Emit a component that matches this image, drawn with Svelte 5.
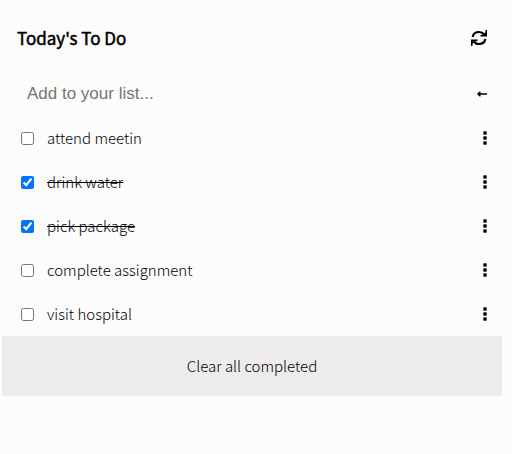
<script>
  let draft = $state('');
  let tasks = $state([
    { id: 1, text: 'attend meetin', done: false },
    { id: 2, text: 'drink water', done: true },
    { id: 3, text: 'pick package', done: true },
    { id: 4, text: 'complete assignment', done: false },
    { id: 5, text: 'visit hospital', done: false }
  ]);

  function add(event) {
    event.preventDefault();
    if (!draft.trim()) return;
    tasks.push({ id: Date.now(), text: draft.trim(), done: false });
    draft = '';
  }

  function clearCompleted() {
    tasks = tasks.filter((task) => !task.done);
  }
</script>

<main>
  <header>
    <h1>Today's To Do</h1>
    <button class="icon" type="button" aria-label="Refresh">
      <svg width="16" height="16" viewBox="0 0 16 16">
        <g fill="none" stroke="#000" stroke-width="2.200">
          <path d="M1.700 7C2.200 3.800 4.800 2 8 2c2 0 3.800 .8 5 2.300" />
          <path d="M14.300 9C13.800 12.200 11.200 14 8 14c-2 0-3.800-.8-5-2.300" />
        </g>
        <path d="M16 0v6.500H9.500V5l3-.5L14.500 2V0zM0 16V9.500h6.500V11l-3 .5L1.500 14v2z" />
      </svg>
    </button>
  </header>

  <form onsubmit={add}>
    <input type="text" placeholder="Add to your list..." aria-label="Add to your list" bind:value={draft} />
    <button class="icon" type="submit" aria-label="Add">
      <svg width="10" height="8" viewBox="0 0 10 8">
        <path d="M0 4l2.500-2.500h1v1.800H10v1.400H3.500v1.800h-1z" fill="#000" />
      </svg>
    </button>
  </form>

  <ul>
    {#each tasks as task (task.id)}
      <li>
        <label class:done={task.done}>
          <input type="checkbox" bind:checked={task.done} />
          <span>{task.text}</span>
        </label>
        <button class="icon" type="button" aria-label="Options for {task.text}">
          <svg width="4" height="14" viewBox="0 0 4 14">
            <rect x=".3" y=".3" width="3.400" height="3.400" rx=".7" />
            <rect x=".3" y="5.300" width="3.400" height="3.400" rx=".7" />
            <rect x=".3" y="10.300" width="3.400" height="3.400" rx=".7" />
          </svg>
        </button>
      </li>
    {/each}
  </ul>

  <button class="clear" type="button" onclick={clearCompleted}>Clear all completed</button>
</main>

<style>
  :global(body) {
    background: #fcfcfc;
  }

  main {
    margin: 0 10px 0 2px;
    padding-top: 8px;
    color: #000;
    font: 300 15px/24px 'Noto Sans CJK SC', 'Noto Sans', sans-serif;
  }

  header,
  form,
  li {
    display: flex;
    align-items: center;
    justify-content: space-between;
    padding: 0 15px;
  }

  header {
    height: 60px;
    margin-bottom: 4px;
  }

  h1 {
    margin: 0;
    font-size: 17px;
    font-weight: 400;
    -webkit-text-stroke: 0.5px #000;
  }

  form {
    height: 44px;
  }

  form input {
    flex: 1;
    min-width: 0;
    padding: 0 10px;
    border: 0;
    outline: 0;
    background: transparent;
    font: 17px/24px 'Liberation Sans', Arial, sans-serif;
  }

  .icon {
    display: flex;
    padding: 0;
    border: 0;
    background: none;
    cursor: pointer;
  }

  ul {
    margin: 0;
    padding: 0;
    list-style: none;
  }

  li {
    height: 44px;
  }

  label {
    display: flex;
    align-items: center;
  }

  label input {
    width: 13px;
    height: 13px;
    margin: 0 13px 0 4px;
  }

  .done span {
    text-decoration: line-through;
  }

  .clear {
    display: block;
    width: 100%;
    height: 60px;
    padding: 0;
    border: 0;
    background: #edebeb;
    color: inherit;
    font: inherit;
    cursor: pointer;
  }
</style>
